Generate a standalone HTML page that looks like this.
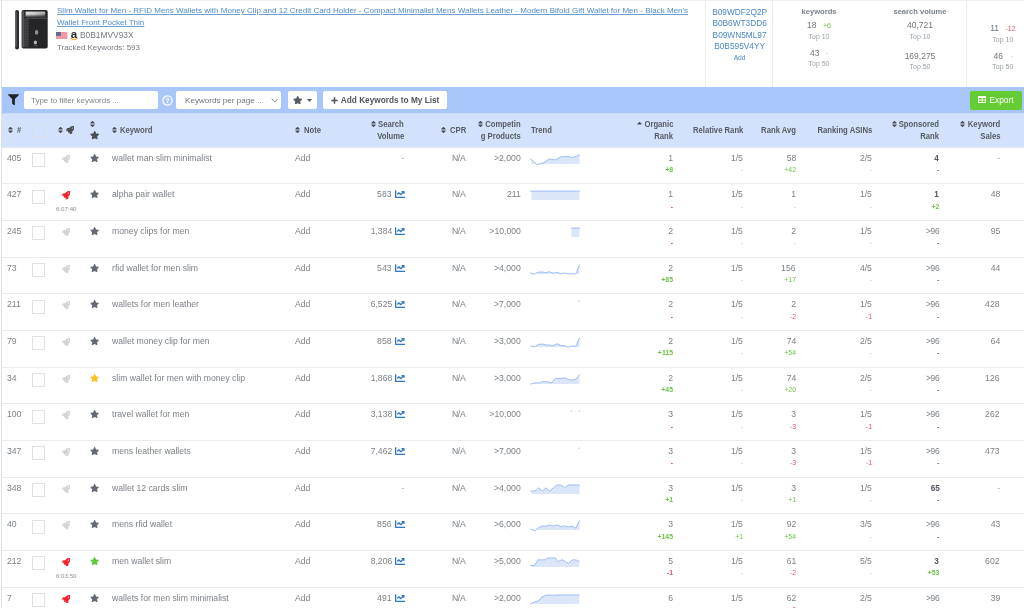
<!DOCTYPE html>
<html lang="en">
<head>
<meta charset="utf-8">
<title>Keyword Tracker</title>
<style>
*{box-sizing:border-box;margin:0;padding:0}
html,body{width:1024px;height:608px;overflow:hidden;background:#fff}
body{position:relative;font-family:"Liberation Sans",sans-serif;color:#6b747d;font-size:8.65px;line-height:11.5px}
.a{position:absolute;white-space:nowrap}
.c{font-size:9.3px;line-height:11.5px;color:#7b8188;transform:scaleX(.93)}
.ol{transform-origin:0 50%}
.or{transform-origin:100% 50%}
.b{font-weight:700;color:#4f565e;font-size:8.8px}
.s96{font-size:9px;letter-spacing:-0.3px}
.na{letter-spacing:-0.4px}
.d{font-size:6.9px;line-height:8px}
.db{font-weight:700}
.dg{color:#b9bec3}
.dp{color:#6cc24a}
.dr{color:#e25563}
.tm{font-size:6.2px;line-height:8px;color:#8b9197}
.rl{left:2px;width:1022px;height:1px;background:#e8eaec}
.cb{left:31.5px;width:13.5px;height:13.9px;border:1px solid #dfe0e2;background:#fff;border-radius:0.5px}
.lb{left:1px;top:0;width:1px;height:608px;background:#dfe1e4}
.vl{top:0;width:1px;height:87px;background:#e9ebed}
.tb{left:2px;top:87px;width:1022px;height:26px;background:#a9c6fb}
.hd{left:2px;top:113px;width:1022px;height:34px;background:#d2e2fd;border-top:1px solid #cbd7ea}
.hl{left:2px;top:147px;width:1022px;height:1px;background:#e3e5e8}
.h{font-size:8.6px;line-height:11.6px;font-weight:700;color:#555b62;transform:scaleX(.895)}
.btn{background:#fff;border-radius:2px;top:91.3px;height:18px}
.lnk{color:#4f8bc9;text-decoration:underline;text-decoration-thickness:0.8px;text-underline-offset:1.2px;text-decoration-color:#6a9fd4;font-size:8.03px;line-height:11px}
.asin{color:#4a86c5;font-size:8.3px;line-height:11.5px}
.st{font-size:7.6px;line-height:10px;color:#7c848b;font-weight:700}
.sn{font-size:8.5px;line-height:11px;color:#6f767d}
.sl{font-size:7px;line-height:9px;color:#9aa0a6}
</style>
</head>
<body>
<div id="w" style="position:absolute;left:0;top:0;width:1024px;height:608px;will-change:transform">
<div class="a" style="left:0;top:0;width:1024px;height:1px;background:#eceef0"></div>
<div class="a lb"></div>
<!-- product -->
<svg class="a" style="left:14px;top:9px" width="35" height="42" viewBox="0 0 35 42">
<defs>
<linearGradient id="gs" x1="0" y1="0" x2="1" y2="1"><stop offset="0" stop-color="#f2f2f2"/><stop offset="0.55" stop-color="#b5b5b5"/><stop offset="1" stop-color="#5c5c5c"/></linearGradient>
<pattern id="cf" width="1.6" height="1.6" patternUnits="userSpaceOnUse"><rect width="0.8" height="0.8" fill="#8d8d8d"/><rect x="0.8" y="0.8" width="0.8" height="0.8" fill="#6e6e6e"/></pattern>
</defs>
<rect x="1.1" y="1" width="3.9" height="39.4" rx="1.9" fill="#2c2c2e"/>
<rect x="1.5" y="3" width="0.9" height="35" fill="#8a8a8e"/>
<rect x="7.6" y="1" width="26.1" height="38.6" rx="1.8" fill="#252527"/>
<rect x="8.3" y="2" width="2" height="36.4" fill="#55555a"/>
<rect x="11.6" y="2.6" width="19.6" height="5" fill="url(#gs)"/>
<rect x="11.6" y="6.4" width="19.6" height="1.4" fill="#3a3a3c" opacity="0.6"/>
<rect x="12.5" y="8.800" width="20.5" height="0.600" fill="#77777b"/>
<rect x="10.5" y="9.6" width="4.2" height="28.5" fill="url(#cf)" opacity="0.55"/>
<ellipse cx="22.600" cy="23.400" rx="1.700" ry="2.400" fill="#8f8f93"/>
<ellipse cx="21.400" cy="33.500" rx="1.600" ry="2" fill="#b4b4b8"/>
<rect x="19.6" y="36.600" width="3.800" height="0.500" fill="#77777b"/>
</svg>
<div class="a lnk" style="left:57px;top:4.9px">Slim Wallet for Men - RFID Mens Wallets with Money Clip and 12 Credit Card Holder - Compact Minimalist Mens Wallets Leather - Modern Bifold Gift Wallet for Men - Black Men's</div>
<div class="a lnk" style="left:57px;top:16.9px">Wallet Front Pocket Thin</div>
<svg class="a" style="left:56.3px;top:31.9px" width="11.4" height="7.1" viewBox="0 0 22.800 14.200"><rect width="22.800" height="14.200" fill="#ee95a1"/><rect y="2.200" width="22.800" height="1.600" fill="#f0a4ae"/><rect y="6.500" width="22.800" height="1.600" fill="#f0a4ae"/><rect y="10.800" width="22.800" height="1.600" fill="#f0a4ae"/><rect width="9.800" height="7.800" fill="#666b86"/><circle cx="6.400" cy="6.800" r="1.500" fill="#3f86d8"/></svg>
<svg class="a" style="left:69px;top:29px" width="10" height="12" viewBox="0 0 10 12"><text x="5" y="8.500" text-anchor="middle" style="font-family:'Liberation Sans',sans-serif;font-weight:700;font-size:11.500px" fill="#25272b">a</text><path d="M1.300 9.400 Q5 12.200 8.700 9.400" stroke="#f08a24" stroke-width="1" fill="none"/><path d="M3.800 10.600 H6.200" stroke="#f7c325" stroke-width="1" fill="none"/></svg>
<div class="a" style="left:80px;top:30px;font-size:8.4px;line-height:11px;color:#737b83">B0B1MVV93X</div>
<div class="a" style="left:57px;top:42px;font-size:7.93px;line-height:11px;color:#737b83">Tracked Keywords: 593</div>

<div class="a vl" style="left:705px"></div>
<div class="a vl" style="left:772px"></div>
<div class="a vl" style="left:966px"></div>

<div class="a asin" style="left:639.6px;width:200px;text-align:center;top:6.9px">B09WDF2Q2P</div>
<div class="a asin" style="left:639.6px;width:200px;text-align:center;top:18.4px">B0B6WT3DD6</div>
<div class="a asin" style="left:639.6px;width:200px;text-align:center;top:29.9px">B09WN5ML97</div>
<div class="a asin" style="left:639.6px;width:200px;text-align:center;top:41.3px">B0B595V4YY</div>
<div class="a" style="left:639.6px;width:200px;text-align:center;top:53.4px;font-size:6.6px;line-height:9px;color:#4a86c5">Add</div>

<div class="a st" style="left:719px;width:200px;text-align:center;top:6.6px">keywords</div>
<div class="a sn" style="right:207.5px;top:19.8px">18</div>
<div class="a d dp" style="left:823px;top:21.6px">+6</div>
<div class="a sl" style="left:719px;width:200px;text-align:center;top:31.6px">Top 10</div>
<div class="a sn" style="right:204.5px;top:47.6px">43</div>
<div class="a d dg" style="left:826px;top:49.4px">-</div>
<div class="a sl" style="left:719px;width:200px;text-align:center;top:58.8px">Top 50</div>

<div class="a st" style="left:820px;width:200px;text-align:center;top:6.6px">search volume</div>
<div class="a sn" style="left:820px;width:200px;text-align:center;top:19.8px">40,721</div>
<div class="a sl" style="left:820px;width:200px;text-align:center;top:31.6px">Top 10</div>
<div class="a sn" style="left:820px;width:200px;text-align:center;top:50.8px">169,275</div>
<div class="a sl" style="left:820px;width:200px;text-align:center;top:62px">Top 50</div>

<div class="a sn" style="right:25px;top:23.3px">11</div>
<div class="a d dr" style="left:1005.5px;top:25px">-12</div>
<div class="a sl" style="left:902.8px;width:200px;text-align:center;top:35px">Top 10</div>
<div class="a sn" style="right:21px;top:50.5px">46</div>
<div class="a d dg" style="left:1011px;top:52.2px">-</div>
<div class="a sl" style="left:902.8px;width:200px;text-align:center;top:62.4px">Top 50</div>

<!-- toolbar -->
<div class="a tb"></div>
<svg class="a" style="left:7.5px;top:94.3px" width="11" height="11.4" viewBox="0 0 512 512" fill="#1f2226"><path d="M487.976 0H24.028C2.710 0-8.047 25.866 7.058 40.971L192 225.941V432c0 7.831 3.821 15.170 10.237 19.662l80 55.980C298.020 518.690 320 507.493 320 487.980V225.941l184.947-184.970C520.021 25.896 509.338 0 487.976 0z"/></svg>
<div class="a btn" style="left:24px;width:134px"></div>
<div class="a" style="left:31px;top:94.6px;font-size:7.96px;line-height:11px;color:#7f868d">Type to filter keywords ...</div>
<svg class="a" style="left:162px;top:94.6px" width="11" height="11" viewBox="0 0 22 22"><circle cx="11" cy="11" r="9.2" fill="none" stroke="#fff" stroke-width="2.4"/><text x="11" y="15.8" text-anchor="middle" style="font-family:'Liberation Sans',sans-serif;font-weight:700;font-size:14px" fill="#fff">?</text></svg>
<div class="a btn" style="left:176.2px;width:104.4px"></div>
<div class="a" style="left:185px;top:94.6px;font-size:8.1px;line-height:11px;color:#6b747d">Keywords per page ...</div>
<svg class="a" style="left:270.5px;top:98px" width="7.6" height="4.8" viewBox="0 0 7.6 4.8"><path d="M0.7 0.7 L3.8 3.9 L6.9 0.7" fill="none" stroke="#666d74" stroke-width="0.85"/></svg>
<div class="a btn" style="left:287.5px;width:29.5px"></div>
<svg class="a" style="left:292.5px;top:95.8px" width="9.4" height="8.4" viewBox="0 0 576 512" fill="#555c63"><path d="M259.300 17.800L194 150.200 47.900 171.500c-26.200 3.800-36.700 36.100-17.700 54.600l105.700 103-25 145.500c-4.500 26.300 23.200 46 46.400 33.700L288 439.600l130.700 68.700c23.200 12.200 50.900-7.400 46.400-33.700l-25-145.500 105.700-103c19-18.500 8.500-50.800-17.700-54.600L382 150.200 316.700 17.800c-11.700-23.600-45.600-23.900-57.400 0z"/></svg>
<svg class="a" style="left:306.5px;top:98.8px" width="5" height="3" viewBox="0 0 5 3"><path d="M0 0H5L2.500 3Z" fill="#555c63"/></svg>
<div class="a btn" style="left:322.7px;width:124px"></div>
<svg class="a" style="left:330.8px;top:96.6px" width="7" height="7" viewBox="0 0 7 7"><path d="M3.5 0.3V6.7M0.300 3.5H6.700" stroke="#4a5158" stroke-width="1.5" fill="none"/></svg>
<div class="a" style="left:340.8px;top:94.8px;font-size:8.25px;line-height:11px;font-weight:700;color:#4f565d">Add Keywords to My List</div>
<div class="a" style="left:970px;top:90.8px;width:52.2px;height:19px;background:#66cc33;border-radius:2px"></div>
<svg class="a" style="left:978px;top:96.3px" width="8.4" height="7.2" viewBox="0 0 14 12"><rect x="0" y="0" width="14" height="12" rx="1" fill="#fff"/><rect x="1.6" y="3.4" width="4.6" height="2.6" fill="#66cc33"/><rect x="7.800" y="3.4" width="4.600" height="2.6" fill="#66cc33"/><rect x="1.600" y="7.600" width="4.600" height="2.600" fill="#66cc33"/><rect x="7.800" y="7.600" width="4.600" height="2.600" fill="#66cc33"/></svg>
<div class="a" style="left:989.4px;top:95px;font-size:8.4px;line-height:11px;color:#fff">Export</div>

<!-- header -->
<div class="a hd"></div><div class="a hl"></div>
<svg class="a" style="left:8px;top:126.2px" width="5" height="8" viewBox="0 0 320 512" fill="#4b4f55"><path d="M41 288h238c21.400 0 32.100 25.900 17 41L177 448c-9.400 9.400-24.600 9.400-33.900 0L24 329c-15.100-15.100-4.400-41 17-41zm255-105L177 64c-9.400-9.400-24.600-9.400-33.900 0L24 183c-15.100 15.100-4.400 41 17 41h238c21.400 0 32.100-25.900 17-41z"/></svg>
<div class="a ol h" style="left:16.5px;top:125.10px;">#</div>
<div class="a" style="left:31.6px;top:123.6px;width:13.2px;height:13.2px;border:1px dotted #e0dbd2;border-radius:1px"></div>
<svg class="a" style="left:58px;top:126.2px" width="5" height="8" viewBox="0 0 320 512" fill="#4b4f55"><path d="M41 288h238c21.400 0 32.100 25.900 17 41L177 448c-9.400 9.400-24.600 9.400-33.900 0L24 329c-15.100-15.100-4.400-41 17-41zm255-105L177 64c-9.400-9.400-24.600-9.400-33.900 0L24 183c-15.100 15.100-4.400 41 17 41h238c21.400 0 32.100-25.900 17-41z"/></svg>
<svg class="a" style="left:66px;top:126px" width="8.4" height="8.4" viewBox="0 0 512 512" fill="#4b4f55"><path d="M505.1 19.1C503.8 13 499 8.2 492.900 6.900c-32.600-7-58.100-7-83.600-7C305.200 0 243.200 55.700 196.800 128H94.800c-16.300 0-35.600 11.900-42.900 26.500L2.500 253.300c-1.600 3.400-2.500 7-2.500 10.700 0 13.300 10.700 24 24 24h103.800l-22.500 22.500c-11.400 11.400-13 32.300 0 45.300l50.900 50.900c11.200 11.200 32.200 13.200 45.300 0l22.500-22.500V488c0 13.300 10.700 24 24 24 3.700 0 7.300-.9 10.700-2.500l98.700-49.400c14.600-7.300 26.500-26.600 26.500-42.900V314.800c72.600-46.300 128-108.400 128-211.100.1-25.200.1-50.700-6.800-84.600zM384 168c-22.100 0-40-17.900-40-40s17.900-40 40-40 40 17.900 40 40-17.900 40-40 40z"/></svg>
<svg class="a" style="left:89.9px;top:120.4px" width="5" height="8" viewBox="0 0 320 512" fill="#4b4f55"><path d="M41 288h238c21.400 0 32.100 25.900 17 41L177 448c-9.400 9.400-24.600 9.400-33.900 0L24 329c-15.100-15.100-4.400-41 17-41zm255-105L177 64c-9.400-9.400-24.600-9.400-33.900 0L24 183c-15.100 15.100-4.400 41 17 41h238c21.400 0 32.100-25.900 17-41z"/></svg>
<svg class="a" style="left:89.8px;top:131.2px" width="9.4" height="8.4" viewBox="0 0 576 512" fill="#4b4f55"><path d="M259.300 17.800L194 150.200 47.900 171.500c-26.200 3.800-36.700 36.100-17.700 54.600l105.700 103-25 145.500c-4.500 26.300 23.200 46 46.400 33.700L288 439.600l130.700 68.700c23.200 12.200 50.900-7.400 46.400-33.700l-25-145.500 105.700-103c19-18.500 8.500-50.800-17.700-54.600L382 150.200 316.700 17.800c-11.700-23.600-45.600-23.900-57.400 0z"/></svg>
<svg class="a" style="left:112px;top:126.2px" width="5" height="8" viewBox="0 0 320 512" fill="#4b4f55"><path d="M41 288h238c21.400 0 32.100 25.900 17 41L177 448c-9.400 9.400-24.600 9.400-33.900 0L24 329c-15.100-15.100-4.400-41 17-41zm255-105L177 64c-9.400-9.400-24.600-9.400-33.900 0L24 183c-15.100 15.100-4.400 41 17 41h238c21.400 0 32.100-25.900 17-41z"/></svg>
<div class="a ol h" style="left:120px;top:125.10px;">Keyword</div>
<svg class="a" style="left:295px;top:126.2px" width="5" height="8" viewBox="0 0 320 512" fill="#4b4f55"><path d="M41 288h238c21.400 0 32.100 25.900 17 41L177 448c-9.400 9.400-24.600 9.400-33.900 0L24 329c-15.100-15.100-4.400-41 17-41zm255-105L177 64c-9.400-9.400-24.600-9.400-33.900 0L24 183c-15.100 15.100-4.400 41 17 41h238c21.400 0 32.100-25.900 17-41z"/></svg>
<div class="a ol h" style="left:304px;top:125.10px;">Note</div>
<svg class="a" style="left:371px;top:120.4px" width="5" height="8" viewBox="0 0 320 512" fill="#4b4f55"><path d="M41 288h238c21.400 0 32.100 25.900 17 41L177 448c-9.400 9.400-24.600 9.400-33.900 0L24 329c-15.100-15.100-4.400-41 17-41zm255-105L177 64c-9.400-9.400-24.600-9.400-33.900 0L24 183c-15.100 15.100-4.400 41 17 41h238c21.400 0 32.100-25.900 17-41z"/></svg>
<div class="a or h" style="right:620px;top:119.20px;">Search</div>
<div class="a or h" style="right:620px;top:131.00px;">Volume</div>
<svg class="a" style="left:441px;top:126.2px" width="5" height="8" viewBox="0 0 320 512" fill="#4b4f55"><path d="M41 288h238c21.400 0 32.100 25.900 17 41L177 448c-9.400 9.400-24.600 9.400-33.900 0L24 329c-15.100-15.100-4.400-41 17-41zm255-105L177 64c-9.400-9.400-24.600-9.400-33.900 0L24 183c-15.100 15.100-4.400 41 17 41h238c21.400 0 32.100-25.900 17-41z"/></svg>
<div class="a ol h" style="left:450px;top:125.10px;">CPR</div>
<svg class="a" style="left:477.5px;top:120.4px" width="5" height="8" viewBox="0 0 320 512" fill="#4b4f55"><path d="M41 288h238c21.400 0 32.100 25.900 17 41L177 448c-9.400 9.400-24.600 9.400-33.900 0L24 329c-15.100-15.100-4.400-41 17-41zm255-105L177 64c-9.400-9.400-24.600-9.400-33.900 0L24 183c-15.100 15.100-4.400 41 17 41h238c21.400 0 32.100-25.900 17-41z"/></svg>
<div class="a or h" style="right:503.5px;top:119.20px;">Competin</div>
<div class="a or h" style="right:503.5px;top:131.00px;">g Products</div>
<div class="a ol h" style="left:530.7px;top:125.10px;">Trend</div>
<svg class="a" style="left:636.5px;top:121.2px" width="5" height="8" viewBox="0 0 320 512" fill="#4b4f55"><path d="M279 224H41c-21.400 0-32.100-25.900-17-41L143 64c9.400-9.400 24.600-9.400 33.900 0l119 119c15.200 15.100 4.500 41-16.900 41z"/></svg>
<div class="a or h" style="right:351px;top:119.20px;">Organic</div>
<div class="a or h" style="right:351px;top:131.00px;">Rank</div>
<div class="a or h" style="right:281px;top:125.10px;">Relative Rank</div>
<div class="a or h" style="right:228px;top:125.10px;">Rank Avg</div>
<div class="a or h" style="right:152px;top:125.10px;">Ranking ASINs</div>
<svg class="a" style="left:892px;top:120.4px" width="5" height="8" viewBox="0 0 320 512" fill="#4b4f55"><path d="M41 288h238c21.400 0 32.100 25.900 17 41L177 448c-9.400 9.400-24.600 9.400-33.900 0L24 329c-15.100-15.100-4.400-41 17-41zm255-105L177 64c-9.400-9.400-24.600-9.400-33.900 0L24 183c-15.100 15.100-4.400 41 17 41h238c21.400 0 32.100-25.900 17-41z"/></svg>
<div class="a or h" style="right:84.70000000000005px;top:119.20px;">Sponsored</div>
<div class="a or h" style="right:84.70000000000005px;top:131.00px;">Rank</div>
<svg class="a" style="left:960px;top:120.4px" width="5" height="8" viewBox="0 0 320 512" fill="#4b4f55"><path d="M41 288h238c21.400 0 32.100 25.900 17 41L177 448c-9.400 9.400-24.600 9.400-33.900 0L24 329c-15.100-15.100-4.400-41 17-41zm255-105L177 64c-9.400-9.400-24.600-9.400-33.900 0L24 183c-15.100 15.100-4.400 41 17 41h238c21.400 0 32.100-25.900 17-41z"/></svg>
<div class="a or h" style="right:24px;top:119.20px;">Keyword</div>
<div class="a or h" style="right:24px;top:131.00px;">Sales</div>
<div class="a rl" style="top:183.37px"></div>
<div class="a ol c" style="left:7px;top:152.80px;">405</div>
<div class="a cb" style="top:153.00px"></div>
<svg class="a" style="left:61.8px;top:154.5px" width="8.6" height="8.6" viewBox="0 0 512 512" fill="#d2d4d6"><path d="M505.1 19.1C503.8 13 499 8.2 492.900 6.900c-32.600-7-58.100-7-83.600-7C305.200 0 243.200 55.700 196.800 128H94.800c-16.300 0-35.600 11.900-42.900 26.500L2.500 253.300c-1.600 3.400-2.500 7-2.500 10.700 0 13.300 10.700 24 24 24h103.800l-22.500 22.500c-11.400 11.400-13 32.300 0 45.300l50.900 50.900c11.200 11.200 32.200 13.200 45.300 0l22.500-22.500V488c0 13.300 10.700 24 24 24 3.700 0 7.300-.9 10.700-2.500l98.700-49.400c14.600-7.300 26.500-26.600 26.500-42.900V314.800c72.600-46.300 128-108.400 128-211.100.1-25.200.1-50.700-6.800-84.600zM384 168c-22.100 0-40-17.900-40-40s17.900-40 40-40 40 17.900 40 40-17.900 40-40 40z"/></svg>
<svg class="a" style="left:89.8px;top:153.7px" width="9.2" height="8.2" viewBox="0 0 576 512" fill="#646a74"><path d="M259.300 17.800L194 150.200 47.900 171.500c-26.200 3.800-36.700 36.100-17.700 54.600l105.700 103-25 145.500c-4.500 26.300 23.200 46 46.400 33.700L288 439.600l130.700 68.700c23.200 12.200 50.900-7.400 46.400-33.700l-25-145.500 105.700-103c19-18.500 8.500-50.800-17.700-54.600L382 150.200 316.700 17.800c-11.700-23.600-45.600-23.900-57.400 0z"/></svg>
<div class="a ol c" style="left:112px;top:152.80px;">wallet man slim minimalist</div>
<div class="a ol c" style="left:295.2px;top:152.80px;">Add</div>
<div class="a or c" style="right:620px;top:152.80px;color:#a0a6ac">-</div>
<div class="a ol c na" style="left:452.2px;top:152.80px;">N/A</div>
<div class="a or c" style="right:503.5px;top:152.80px;">>2,000</div>
<svg class="a" style="left:529.5px;top:153.70px" width="51" height="12" viewBox="-0.5 -0.8 51 12"><polygon points="1,9.3 1,4.1 0,4.1 6.6,9.7 12.8,8.1 18.75,4.25 24.7,5.1 30.3,2.1 36.6,1.75 42.2,2.6 46,1.4 49,0.2 49,9.3" fill="#dbe7f8"/><polyline points="0,4.1 6.6,9.7 12.8,8.1 18.75,4.25 24.7,5.1 30.3,2.1 36.6,1.75 42.2,2.6 46,1.4 49,0.2" fill="none" stroke="#9dbcf4" stroke-width="1" stroke-linejoin="round" stroke-linecap="round"/></svg>
<div class="a or c" style="right:351px;top:152.80px;">1</div>
<div class="a or d dp db" style="right:351px;top:166.10px;">+8</div>
<div class="a or c" style="right:281px;top:152.80px;">1/5</div>
<div class="a or d dg" style="right:281px;top:166.10px;">-</div>
<div class="a or c" style="right:228px;top:152.80px;">58</div>
<div class="a or d dp" style="right:228px;top:166.10px;">+42</div>
<div class="a or c" style="right:152px;top:152.80px;">2/5</div>
<div class="a or d dg" style="right:152px;top:166.10px;">-</div>
<div class="a or c b" style="right:84.70000000000005px;top:152.80px;">4</div>
<div class="a or d db" style="right:84.70000000000005px;top:166.10px;color:#6b747d">-</div>
<div class="a or c" style="right:24px;top:152.80px;color:#a0a6ac">-</div>
<div class="a rl" style="top:220.03px"></div>
<div class="a ol c" style="left:7px;top:189.47px;">427</div>
<div class="a cb" style="top:189.67px"></div>
<svg class="a" style="left:61.8px;top:191.17px" width="8.6" height="8.6" viewBox="0 0 512 512" fill="#f5222d"><path d="M505.1 19.1C503.8 13 499 8.2 492.900 6.900c-32.600-7-58.100-7-83.600-7C305.200 0 243.200 55.700 196.800 128H94.800c-16.300 0-35.600 11.900-42.900 26.500L2.500 253.300c-1.600 3.400-2.500 7-2.500 10.700 0 13.300 10.700 24 24 24h103.800l-22.500 22.500c-11.400 11.400-13 32.300 0 45.300l50.900 50.900c11.200 11.200 32.200 13.200 45.300 0l22.500-22.500V488c0 13.300 10.700 24 24 24 3.700 0 7.300-.9 10.700-2.500l98.700-49.400c14.600-7.300 26.500-26.600 26.500-42.900V314.800c72.600-46.300 128-108.400 128-211.100.1-25.200.1-50.700-6.800-84.600zM384 168c-22.100 0-40-17.900-40-40s17.900-40 40-40 40 17.900 40 40-17.900 40-40 40z"/></svg>
<div class="a tm" style="left:-33.8px;width:200px;text-align:center;top:205.27px;">6:07:40</div>
<svg class="a" style="left:89.8px;top:190.37px" width="9.2" height="8.2" viewBox="0 0 576 512" fill="#646a74"><path d="M259.300 17.800L194 150.200 47.900 171.500c-26.200 3.800-36.700 36.100-17.700 54.600l105.700 103-25 145.500c-4.500 26.300 23.200 46 46.400 33.700L288 439.600l130.700 68.700c23.200 12.200 50.900-7.400 46.400-33.700l-25-145.500 105.700-103c19-18.500 8.500-50.800-17.700-54.600L382 150.200 316.700 17.800c-11.700-23.600-45.600-23.900-57.400 0z"/></svg>
<div class="a ol c" style="left:112px;top:189.47px;">alpha pair wallet</div>
<div class="a ol c" style="left:295.2px;top:189.47px;">Add</div>
<div class="a or c" style="right:632px;top:189.47px;">583</div>
<svg class="a" style="left:394.6px;top:189.27px" width="10.2" height="10.2" viewBox="0 0 512 512" fill="#2f78c4"><path d="M496 384H64V80c0-8.840-7.160-16-16-16H16C7.160 64 0 71.160 0 80v336c0 17.670 14.330 32 32 32h464c8.840 0 16-7.160 16-16v-32c0-8.840-7.160-16-16-16zM464 96H345.940c-21.380 0-32.090 25.850-16.970 40.970l32.400 32.400L288 242.750l-73.370-73.370c-12.500-12.500-32.760-12.500-45.250 0l-68.690 68.690c-6.250 6.250-6.250 16.380 0 22.630l22.620 22.620c6.250 6.250 16.380 6.250 22.630 0L192 237.250l73.370 73.370c12.500 12.500 32.760 12.500 45.250 0l96-96 32.400 32.400c15.120 15.120 40.970 4.410 40.970-16.970V112c.01-8.840-7.150-16-15.990-16z"/></svg>
<div class="a ol c na" style="left:452.2px;top:189.47px;">N/A</div>
<div class="a or c" style="right:503.5px;top:189.47px;">211</div>
<svg class="a" style="left:529.5px;top:190.37px" width="51" height="12" viewBox="-0.5 -0.8 51 12"><polygon points="1,9.3 1,0.3 0,0.3 49,0.3 49,9.3" fill="#dbe7f8"/><polyline points="0,0.3 49,0.3" fill="none" stroke="#9dbcf4" stroke-width="1" stroke-linejoin="round" stroke-linecap="round"/></svg>
<div class="a or c" style="right:351px;top:189.47px;">1</div>
<div class="a or d dr db" style="right:351px;top:202.77px;">-</div>
<div class="a or c" style="right:281px;top:189.47px;">1/5</div>
<div class="a or d dg" style="right:281px;top:202.77px;">-</div>
<div class="a or c" style="right:228px;top:189.47px;">1</div>
<div class="a or d dg" style="right:228px;top:202.77px;">-</div>
<div class="a or c" style="right:152px;top:189.47px;">1/5</div>
<div class="a or d dg" style="right:152px;top:202.77px;">-</div>
<div class="a or c b" style="right:84.70000000000005px;top:189.47px;">1</div>
<div class="a or d dp db" style="right:84.70000000000005px;top:202.77px;">+2</div>
<div class="a or c" style="right:24px;top:189.47px;">48</div>
<div class="a rl" style="top:256.70px"></div>
<div class="a ol c" style="left:7px;top:226.13px;">245</div>
<div class="a cb" style="top:226.33px"></div>
<svg class="a" style="left:61.8px;top:227.83px" width="8.6" height="8.6" viewBox="0 0 512 512" fill="#d2d4d6"><path d="M505.1 19.1C503.8 13 499 8.2 492.900 6.900c-32.600-7-58.100-7-83.600-7C305.200 0 243.200 55.700 196.800 128H94.800c-16.300 0-35.600 11.900-42.900 26.500L2.500 253.300c-1.600 3.400-2.500 7-2.500 10.700 0 13.300 10.700 24 24 24h103.800l-22.500 22.500c-11.400 11.400-13 32.300 0 45.300l50.900 50.900c11.200 11.200 32.200 13.200 45.300 0l22.500-22.500V488c0 13.300 10.700 24 24 24 3.700 0 7.300-.9 10.700-2.500l98.700-49.400c14.600-7.300 26.500-26.600 26.500-42.900V314.800c72.600-46.300 128-108.400 128-211.100.1-25.200.1-50.700-6.800-84.600zM384 168c-22.100 0-40-17.900-40-40s17.900-40 40-40 40 17.900 40 40-17.900 40-40 40z"/></svg>
<svg class="a" style="left:89.8px;top:227.03px" width="9.2" height="8.2" viewBox="0 0 576 512" fill="#646a74"><path d="M259.300 17.800L194 150.200 47.900 171.500c-26.200 3.800-36.700 36.100-17.700 54.600l105.700 103-25 145.500c-4.500 26.300 23.200 46 46.400 33.700L288 439.600l130.700 68.700c23.200 12.200 50.900-7.400 46.400-33.700l-25-145.500 105.700-103c19-18.500 8.500-50.800-17.700-54.600L382 150.200 316.700 17.800c-11.700-23.600-45.600-23.900-57.400 0z"/></svg>
<div class="a ol c" style="left:112px;top:226.13px;">money clips for men</div>
<div class="a ol c" style="left:295.2px;top:226.13px;">Add</div>
<div class="a or c" style="right:632px;top:226.13px;">1,384</div>
<svg class="a" style="left:394.6px;top:225.93px" width="10.2" height="10.2" viewBox="0 0 512 512" fill="#2f78c4"><path d="M496 384H64V80c0-8.840-7.160-16-16-16H16C7.160 64 0 71.160 0 80v336c0 17.670 14.330 32 32 32h464c8.840 0 16-7.160 16-16v-32c0-8.840-7.160-16-16-16zM464 96H345.940c-21.380 0-32.090 25.850-16.970 40.970l32.400 32.400L288 242.750l-73.370-73.370c-12.500-12.500-32.760-12.500-45.250 0l-68.690 68.690c-6.250 6.250-6.250 16.380 0 22.630l22.620 22.620c6.250 6.250 16.380 6.250 22.630 0L192 237.250l73.370 73.370c12.500 12.500 32.760 12.500 45.250 0l96-96 32.400 32.400c15.120 15.120 40.970 4.410 40.970-16.970V112c.01-8.840-7.150-16-15.990-16z"/></svg>
<div class="a ol c na" style="left:452.2px;top:226.13px;">N/A</div>
<div class="a or c" style="right:503.5px;top:226.13px;">>10,000</div>
<svg class="a" style="left:529.5px;top:227.03px" width="51" height="12" viewBox="-0.5 -0.8 51 12"><polygon points="41,9.3 41,0.3 41,0.3 49,0.3 49,9.3" fill="#dbe7f8"/><polyline points="41,0.3 49,0.3" fill="none" stroke="#9dbcf4" stroke-width="1" stroke-linejoin="round" stroke-linecap="round"/></svg>
<div class="a or c" style="right:351px;top:226.13px;">2</div>
<div class="a or d dr db" style="right:351px;top:239.43px;">-</div>
<div class="a or c" style="right:281px;top:226.13px;">1/5</div>
<div class="a or d dg" style="right:281px;top:239.43px;">-</div>
<div class="a or c" style="right:228px;top:226.13px;">2</div>
<div class="a or d dg" style="right:228px;top:239.43px;">-</div>
<div class="a or c" style="right:152px;top:226.13px;">1/5</div>
<div class="a or d dg" style="right:152px;top:239.43px;">-</div>
<div class="a or c s96" style="right:84.70000000000005px;top:226.13px;">>96</div>
<div class="a or d db" style="right:84.70000000000005px;top:239.43px;color:#6b747d">-</div>
<div class="a or c" style="right:24px;top:226.13px;">95</div>
<div class="a rl" style="top:293.37px"></div>
<div class="a ol c" style="left:7px;top:262.80px;">73</div>
<div class="a cb" style="top:263.00px"></div>
<svg class="a" style="left:61.8px;top:264.5px" width="8.6" height="8.6" viewBox="0 0 512 512" fill="#d2d4d6"><path d="M505.1 19.1C503.8 13 499 8.2 492.900 6.900c-32.600-7-58.100-7-83.600-7C305.200 0 243.200 55.700 196.800 128H94.800c-16.300 0-35.600 11.900-42.900 26.500L2.500 253.300c-1.600 3.400-2.500 7-2.500 10.700 0 13.300 10.700 24 24 24h103.800l-22.500 22.500c-11.400 11.400-13 32.300 0 45.300l50.900 50.900c11.200 11.200 32.200 13.200 45.300 0l22.500-22.500V488c0 13.300 10.700 24 24 24 3.700 0 7.300-.9 10.700-2.500l98.700-49.400c14.600-7.300 26.500-26.600 26.500-42.900V314.800c72.600-46.300 128-108.400 128-211.100.1-25.200.1-50.700-6.800-84.600zM384 168c-22.100 0-40-17.900-40-40s17.900-40 40-40 40 17.900 40 40-17.900 40-40 40z"/></svg>
<svg class="a" style="left:89.8px;top:263.7px" width="9.2" height="8.2" viewBox="0 0 576 512" fill="#646a74"><path d="M259.300 17.800L194 150.200 47.900 171.500c-26.200 3.800-36.700 36.100-17.700 54.600l105.700 103-25 145.500c-4.500 26.300 23.200 46 46.400 33.700L288 439.600l130.700 68.700c23.200 12.200 50.900-7.400 46.400-33.700l-25-145.500 105.700-103c19-18.500 8.500-50.800-17.700-54.600L382 150.200 316.700 17.800c-11.700-23.600-45.600-23.900-57.400 0z"/></svg>
<div class="a ol c" style="left:112px;top:262.80px;">rfid wallet for men slim</div>
<div class="a ol c" style="left:295.2px;top:262.80px;">Add</div>
<div class="a or c" style="right:632px;top:262.80px;">543</div>
<svg class="a" style="left:394.6px;top:262.6px" width="10.2" height="10.2" viewBox="0 0 512 512" fill="#2f78c4"><path d="M496 384H64V80c0-8.840-7.160-16-16-16H16C7.160 64 0 71.160 0 80v336c0 17.670 14.330 32 32 32h464c8.840 0 16-7.160 16-16v-32c0-8.840-7.160-16-16-16zM464 96H345.940c-21.380 0-32.090 25.850-16.970 40.970l32.400 32.400L288 242.750l-73.370-73.370c-12.500-12.500-32.760-12.500-45.250 0l-68.690 68.690c-6.250 6.250-6.250 16.380 0 22.630l22.620 22.620c6.250 6.250 16.380 6.250 22.630 0L192 237.250l73.370 73.370c12.500 12.500 32.760 12.500 45.250 0l96-96 32.400 32.400c15.120 15.120 40.970 4.410 40.970-16.970V112c.01-8.840-7.150-16-15.990-16z"/></svg>
<div class="a ol c na" style="left:452.2px;top:262.80px;">N/A</div>
<div class="a or c" style="right:503.5px;top:262.80px;">>4,000</div>
<svg class="a" style="left:529.5px;top:263.70px" width="51" height="12" viewBox="-0.5 -0.8 51 12"><polygon points="1,9.3 1,8.4 0,8.4 4,9.5 7.5,7.3 11.5,7.2 15.3,7.7 19,6.9 22.8,8.4 26.5,7.5 30.3,9 34.4,8.3 37.8,9 41.5,9 45.3,9 49,0.3 49,9.3" fill="#dbe7f8"/><polyline points="0,8.4 4,9.5 7.5,7.3 11.5,7.2 15.3,7.7 19,6.9 22.8,8.4 26.5,7.5 30.3,9 34.4,8.3 37.8,9 41.5,9 45.3,9 49,0.3" fill="none" stroke="#9dbcf4" stroke-width="1" stroke-linejoin="round" stroke-linecap="round"/></svg>
<div class="a or c" style="right:351px;top:262.80px;">2</div>
<div class="a or d dp db" style="right:351px;top:276.10px;">+85</div>
<div class="a or c" style="right:281px;top:262.80px;">1/5</div>
<div class="a or d dg" style="right:281px;top:276.10px;">-</div>
<div class="a or c" style="right:228px;top:262.80px;">156</div>
<div class="a or d dp" style="right:228px;top:276.10px;">+17</div>
<div class="a or c" style="right:152px;top:262.80px;">4/5</div>
<div class="a or d dg" style="right:152px;top:276.10px;">-</div>
<div class="a or c s96" style="right:84.70000000000005px;top:262.80px;">>96</div>
<div class="a or d db" style="right:84.70000000000005px;top:276.10px;color:#6b747d">-</div>
<div class="a or c" style="right:24px;top:262.80px;">44</div>
<div class="a rl" style="top:330.03px"></div>
<div class="a ol c" style="left:7px;top:299.47px;">211</div>
<div class="a cb" style="top:299.67px"></div>
<svg class="a" style="left:61.8px;top:301.17px" width="8.6" height="8.6" viewBox="0 0 512 512" fill="#d2d4d6"><path d="M505.1 19.1C503.8 13 499 8.2 492.900 6.900c-32.600-7-58.100-7-83.600-7C305.200 0 243.200 55.700 196.800 128H94.800c-16.300 0-35.600 11.900-42.900 26.500L2.500 253.300c-1.600 3.400-2.500 7-2.500 10.700 0 13.300 10.700 24 24 24h103.800l-22.500 22.500c-11.400 11.400-13 32.300 0 45.300l50.900 50.900c11.200 11.200 32.200 13.200 45.300 0l22.500-22.500V488c0 13.300 10.700 24 24 24 3.700 0 7.300-.9 10.700-2.500l98.700-49.400c14.600-7.300 26.500-26.600 26.500-42.900V314.800c72.600-46.300 128-108.400 128-211.100.1-25.200.1-50.700-6.800-84.600zM384 168c-22.100 0-40-17.900-40-40s17.900-40 40-40 40 17.900 40 40-17.900 40-40 40z"/></svg>
<svg class="a" style="left:89.8px;top:300.37px" width="9.2" height="8.2" viewBox="0 0 576 512" fill="#646a74"><path d="M259.300 17.800L194 150.200 47.900 171.500c-26.200 3.800-36.700 36.100-17.700 54.600l105.700 103-25 145.500c-4.500 26.300 23.200 46 46.400 33.700L288 439.600l130.700 68.700c23.200 12.200 50.900-7.400 46.400-33.700l-25-145.500 105.700-103c19-18.500 8.500-50.800-17.700-54.600L382 150.200 316.700 17.800c-11.700-23.600-45.600-23.900-57.400 0z"/></svg>
<div class="a ol c" style="left:112px;top:299.47px;">wallets for men leather</div>
<div class="a ol c" style="left:295.2px;top:299.47px;">Add</div>
<div class="a or c" style="right:632px;top:299.47px;">6,525</div>
<svg class="a" style="left:394.6px;top:299.27px" width="10.2" height="10.2" viewBox="0 0 512 512" fill="#2f78c4"><path d="M496 384H64V80c0-8.840-7.160-16-16-16H16C7.160 64 0 71.160 0 80v336c0 17.670 14.330 32 32 32h464c8.840 0 16-7.160 16-16v-32c0-8.840-7.160-16-16-16zM464 96H345.940c-21.380 0-32.090 25.850-16.970 40.970l32.400 32.400L288 242.750l-73.370-73.370c-12.500-12.500-32.760-12.500-45.250 0l-68.690 68.690c-6.250 6.250-6.250 16.380 0 22.630l22.620 22.620c6.250 6.250 16.380 6.250 22.630 0L192 237.250l73.370 73.370c12.500 12.500 32.760 12.500 45.250 0l96-96 32.400 32.400c15.120 15.120 40.970 4.410 40.970-16.970V112c.01-8.840-7.150-16-15.990-16z"/></svg>
<div class="a ol c na" style="left:452.2px;top:299.47px;">N/A</div>
<div class="a or c" style="right:503.5px;top:299.47px;">>7,000</div>
<svg class="a" style="left:529.5px;top:300.37px" width="51" height="12" viewBox="-0.5 -0.8 51 12"><circle cx="48.5" cy="0.3" r="0.7" fill="#8ab1ec"/></svg>
<div class="a or c" style="right:351px;top:299.47px;">2</div>
<div class="a or d dr db" style="right:351px;top:312.77px;">-</div>
<div class="a or c" style="right:281px;top:299.47px;">1/5</div>
<div class="a or d dg" style="right:281px;top:312.77px;">-</div>
<div class="a or c" style="right:228px;top:299.47px;">2</div>
<div class="a or d dr" style="right:228px;top:312.77px;">-2</div>
<div class="a or c" style="right:152px;top:299.47px;">1/5</div>
<div class="a or d dr" style="right:152px;top:312.77px;">-1</div>
<div class="a or c s96" style="right:84.70000000000005px;top:299.47px;">>96</div>
<div class="a or d db" style="right:84.70000000000005px;top:312.77px;color:#6b747d">-</div>
<div class="a or c" style="right:24px;top:299.47px;">428</div>
<div class="a rl" style="top:366.70px"></div>
<div class="a ol c" style="left:7px;top:336.13px;">79</div>
<div class="a cb" style="top:336.33px"></div>
<svg class="a" style="left:61.8px;top:337.83px" width="8.6" height="8.6" viewBox="0 0 512 512" fill="#d2d4d6"><path d="M505.1 19.1C503.8 13 499 8.2 492.900 6.900c-32.600-7-58.100-7-83.600-7C305.200 0 243.200 55.700 196.800 128H94.800c-16.300 0-35.600 11.900-42.900 26.500L2.500 253.300c-1.600 3.400-2.500 7-2.500 10.700 0 13.300 10.700 24 24 24h103.800l-22.500 22.500c-11.400 11.400-13 32.300 0 45.300l50.900 50.900c11.200 11.200 32.200 13.200 45.300 0l22.500-22.500V488c0 13.300 10.700 24 24 24 3.700 0 7.300-.9 10.700-2.500l98.700-49.400c14.600-7.300 26.500-26.600 26.500-42.900V314.800c72.600-46.300 128-108.400 128-211.100.1-25.200.1-50.700-6.800-84.600zM384 168c-22.100 0-40-17.900-40-40s17.900-40 40-40 40 17.900 40 40-17.900 40-40 40z"/></svg>
<svg class="a" style="left:89.8px;top:337.03px" width="9.2" height="8.2" viewBox="0 0 576 512" fill="#646a74"><path d="M259.300 17.800L194 150.200 47.900 171.500c-26.200 3.800-36.700 36.100-17.700 54.600l105.700 103-25 145.500c-4.500 26.300 23.200 46 46.400 33.700L288 439.600l130.700 68.700c23.200 12.200 50.900-7.400 46.400-33.700l-25-145.500 105.700-103c19-18.500 8.500-50.800-17.700-54.600L382 150.200 316.700 17.800c-11.700-23.600-45.600-23.900-57.400 0z"/></svg>
<div class="a ol c" style="left:112px;top:336.13px;">wallet money clip for men</div>
<div class="a ol c" style="left:295.2px;top:336.13px;">Add</div>
<div class="a or c" style="right:632px;top:336.13px;">858</div>
<svg class="a" style="left:394.6px;top:335.94px" width="10.2" height="10.2" viewBox="0 0 512 512" fill="#2f78c4"><path d="M496 384H64V80c0-8.840-7.160-16-16-16H16C7.160 64 0 71.160 0 80v336c0 17.670 14.330 32 32 32h464c8.840 0 16-7.160 16-16v-32c0-8.840-7.160-16-16-16zM464 96H345.940c-21.380 0-32.090 25.850-16.970 40.970l32.400 32.400L288 242.750l-73.370-73.370c-12.500-12.500-32.760-12.500-45.250 0l-68.690 68.690c-6.250 6.250-6.250 16.380 0 22.630l22.620 22.620c6.250 6.250 16.380 6.250 22.630 0L192 237.250l73.370 73.370c12.500 12.500 32.760 12.500 45.250 0l96-96 32.400 32.400c15.120 15.120 40.970 4.410 40.970-16.970V112c.01-8.840-7.150-16-15.990-16z"/></svg>
<div class="a ol c na" style="left:452.2px;top:336.13px;">N/A</div>
<div class="a or c" style="right:503.5px;top:336.13px;">>3,000</div>
<svg class="a" style="left:529.5px;top:337.03px" width="51" height="12" viewBox="-0.5 -0.8 51 12"><polygon points="1,9.3 1,8.25 0.3,8.25 4,9 7.8,6.6 12.2,6.25 15.3,7.2 19,7.2 22.5,8.1 26.5,5.9 30.6,7.8 34,7.8 37.8,9.4 41.5,8.4 45.3,8.4 49,0 49,9.3" fill="#dbe7f8"/><polyline points="0.3,8.25 4,9 7.8,6.6 12.2,6.25 15.3,7.2 19,7.2 22.5,8.1 26.5,5.9 30.6,7.8 34,7.8 37.8,9.4 41.5,8.4 45.3,8.4 49,0" fill="none" stroke="#9dbcf4" stroke-width="1" stroke-linejoin="round" stroke-linecap="round"/></svg>
<div class="a or c" style="right:351px;top:336.13px;">2</div>
<div class="a or d dp db" style="right:351px;top:349.44px;">+115</div>
<div class="a or c" style="right:281px;top:336.13px;">1/5</div>
<div class="a or d dg" style="right:281px;top:349.44px;">-</div>
<div class="a or c" style="right:228px;top:336.13px;">74</div>
<div class="a or d dp" style="right:228px;top:349.44px;">+54</div>
<div class="a or c" style="right:152px;top:336.13px;">2/5</div>
<div class="a or d dg" style="right:152px;top:349.44px;">-</div>
<div class="a or c s96" style="right:84.70000000000005px;top:336.13px;">>96</div>
<div class="a or d db" style="right:84.70000000000005px;top:349.44px;color:#6b747d">-</div>
<div class="a or c" style="right:24px;top:336.13px;">64</div>
<div class="a rl" style="top:403.37px"></div>
<div class="a ol c" style="left:7px;top:372.80px;">34</div>
<div class="a cb" style="top:373.00px"></div>
<svg class="a" style="left:61.8px;top:374.5px" width="8.6" height="8.6" viewBox="0 0 512 512" fill="#d2d4d6"><path d="M505.1 19.1C503.8 13 499 8.2 492.900 6.900c-32.600-7-58.100-7-83.600-7C305.200 0 243.200 55.700 196.800 128H94.800c-16.300 0-35.600 11.900-42.900 26.500L2.500 253.300c-1.600 3.400-2.500 7-2.500 10.700 0 13.300 10.700 24 24 24h103.800l-22.500 22.500c-11.400 11.400-13 32.300 0 45.300l50.900 50.900c11.200 11.200 32.200 13.200 45.300 0l22.500-22.500V488c0 13.300 10.700 24 24 24 3.700 0 7.300-.9 10.700-2.500l98.700-49.400c14.600-7.300 26.500-26.600 26.500-42.900V314.800c72.600-46.300 128-108.400 128-211.100.1-25.200.1-50.700-6.800-84.600zM384 168c-22.100 0-40-17.900-40-40s17.900-40 40-40 40 17.900 40 40-17.900 40-40 40z"/></svg>
<svg class="a" style="left:89.8px;top:373.7px" width="9.2" height="8.2" viewBox="0 0 576 512" fill="#f7c325"><path d="M259.300 17.800L194 150.200 47.900 171.500c-26.200 3.800-36.700 36.100-17.700 54.600l105.700 103-25 145.500c-4.500 26.300 23.200 46 46.400 33.700L288 439.600l130.700 68.700c23.200 12.200 50.900-7.400 46.400-33.700l-25-145.500 105.700-103c19-18.500 8.500-50.800-17.700-54.600L382 150.200 316.700 17.800c-11.700-23.600-45.600-23.900-57.400 0z"/></svg>
<div class="a ol c" style="left:112px;top:372.80px;">slim wallet for men with money clip</div>
<div class="a ol c" style="left:295.2px;top:372.80px;">Add</div>
<div class="a or c" style="right:632px;top:372.80px;">1,868</div>
<svg class="a" style="left:394.6px;top:372.6px" width="10.2" height="10.2" viewBox="0 0 512 512" fill="#2f78c4"><path d="M496 384H64V80c0-8.840-7.160-16-16-16H16C7.160 64 0 71.160 0 80v336c0 17.670 14.330 32 32 32h464c8.840 0 16-7.160 16-16v-32c0-8.840-7.160-16-16-16zM464 96H345.940c-21.380 0-32.090 25.850-16.970 40.970l32.400 32.400L288 242.750l-73.370-73.370c-12.500-12.500-32.760-12.500-45.250 0l-68.690 68.690c-6.250 6.250-6.250 16.380 0 22.630l22.620 22.620c6.250 6.250 16.380 6.250 22.630 0L192 237.250l73.370 73.370c12.500 12.500 32.760 12.500 45.250 0l96-96 32.400 32.400c15.120 15.120 40.970 4.410 40.970-16.970V112c.01-8.840-7.150-16-15.990-16z"/></svg>
<div class="a ol c na" style="left:452.2px;top:372.80px;">N/A</div>
<div class="a or c" style="right:503.5px;top:372.80px;">>3,000</div>
<svg class="a" style="left:529.5px;top:373.70px" width="51" height="12" viewBox="-0.5 -0.8 51 12"><polygon points="1,9.3 1,9.25 0.3,9.25 4,8.1 8.4,8.25 11,7 14,6.75 17.8,7.2 21.25,8.25 25,3.6 31.5,3.6 34.7,3.1 38.75,5.1 42.2,5.1 45.6,4.25 49,0 49,9.3" fill="#dbe7f8"/><polyline points="0.3,9.25 4,8.1 8.4,8.25 11,7 14,6.75 17.8,7.2 21.25,8.25 25,3.6 31.5,3.6 34.7,3.1 38.75,5.1 42.2,5.1 45.6,4.25 49,0" fill="none" stroke="#9dbcf4" stroke-width="1" stroke-linejoin="round" stroke-linecap="round"/></svg>
<div class="a or c" style="right:351px;top:372.80px;">2</div>
<div class="a or d dp db" style="right:351px;top:386.10px;">+45</div>
<div class="a or c" style="right:281px;top:372.80px;">1/5</div>
<div class="a or d dg" style="right:281px;top:386.10px;">-</div>
<div class="a or c" style="right:228px;top:372.80px;">74</div>
<div class="a or d dp" style="right:228px;top:386.10px;">+20</div>
<div class="a or c" style="right:152px;top:372.80px;">2/5</div>
<div class="a or d dg" style="right:152px;top:386.10px;">-</div>
<div class="a or c s96" style="right:84.70000000000005px;top:372.80px;">>96</div>
<div class="a or d db" style="right:84.70000000000005px;top:386.10px;color:#6b747d">-</div>
<div class="a or c" style="right:24px;top:372.80px;">126</div>
<div class="a rl" style="top:440.04px"></div>
<div class="a ol c" style="left:7px;top:409.47px;">100</div>
<div class="a cb" style="top:409.67px"></div>
<svg class="a" style="left:61.8px;top:411.17px" width="8.6" height="8.6" viewBox="0 0 512 512" fill="#d2d4d6"><path d="M505.1 19.1C503.8 13 499 8.2 492.900 6.900c-32.600-7-58.100-7-83.600-7C305.200 0 243.200 55.700 196.800 128H94.800c-16.300 0-35.600 11.900-42.900 26.500L2.500 253.300c-1.600 3.400-2.500 7-2.500 10.700 0 13.300 10.700 24 24 24h103.800l-22.500 22.500c-11.400 11.400-13 32.300 0 45.300l50.900 50.900c11.200 11.200 32.200 13.200 45.300 0l22.500-22.500V488c0 13.300 10.700 24 24 24 3.700 0 7.300-.9 10.700-2.500l98.700-49.400c14.600-7.300 26.500-26.600 26.500-42.900V314.800c72.600-46.300 128-108.400 128-211.100.1-25.200.1-50.700-6.800-84.600zM384 168c-22.100 0-40-17.900-40-40s17.900-40 40-40 40 17.900 40 40-17.900 40-40 40z"/></svg>
<svg class="a" style="left:89.8px;top:410.37px" width="9.2" height="8.2" viewBox="0 0 576 512" fill="#646a74"><path d="M259.300 17.800L194 150.200 47.900 171.500c-26.200 3.800-36.700 36.100-17.700 54.600l105.700 103-25 145.500c-4.500 26.300 23.200 46 46.400 33.700L288 439.600l130.700 68.700c23.200 12.200 50.900-7.400 46.400-33.700l-25-145.500 105.700-103c19-18.500 8.500-50.800-17.700-54.600L382 150.200 316.700 17.800c-11.700-23.600-45.600-23.900-57.400 0z"/></svg>
<div class="a ol c" style="left:112px;top:409.47px;">travel wallet for men</div>
<div class="a ol c" style="left:295.2px;top:409.47px;">Add</div>
<div class="a or c" style="right:632px;top:409.47px;">3,138</div>
<svg class="a" style="left:394.6px;top:409.27px" width="10.2" height="10.2" viewBox="0 0 512 512" fill="#2f78c4"><path d="M496 384H64V80c0-8.840-7.160-16-16-16H16C7.160 64 0 71.160 0 80v336c0 17.670 14.330 32 32 32h464c8.840 0 16-7.160 16-16v-32c0-8.840-7.160-16-16-16zM464 96H345.940c-21.380 0-32.090 25.850-16.970 40.970l32.400 32.400L288 242.750l-73.370-73.370c-12.500-12.500-32.760-12.500-45.250 0l-68.690 68.690c-6.250 6.250-6.250 16.380 0 22.630l22.620 22.620c6.250 6.250 16.380 6.250 22.630 0L192 237.250l73.370 73.370c12.500 12.500 32.760 12.500 45.250 0l96-96 32.400 32.400c15.120 15.120 40.970 4.410 40.970-16.970V112c.01-8.840-7.150-16-15.990-16z"/></svg>
<div class="a ol c na" style="left:452.2px;top:409.47px;">N/A</div>
<div class="a or c" style="right:503.5px;top:409.47px;">>10,000</div>
<svg class="a" style="left:529.5px;top:410.37px" width="51" height="12" viewBox="-0.5 -0.8 51 12"><circle cx="41" cy="0.3" r="0.7" fill="#8ab1ec"/><circle cx="49" cy="0.3" r="0.7" fill="#8ab1ec"/></svg>
<div class="a or c" style="right:351px;top:409.47px;">3</div>
<div class="a or d dr db" style="right:351px;top:422.77px;">-</div>
<div class="a or c" style="right:281px;top:409.47px;">1/5</div>
<div class="a or d dg" style="right:281px;top:422.77px;">-</div>
<div class="a or c" style="right:228px;top:409.47px;">3</div>
<div class="a or d dr" style="right:228px;top:422.77px;">-3</div>
<div class="a or c" style="right:152px;top:409.47px;">1/5</div>
<div class="a or d dr" style="right:152px;top:422.77px;">-1</div>
<div class="a or c s96" style="right:84.70000000000005px;top:409.47px;">>96</div>
<div class="a or d db" style="right:84.70000000000005px;top:422.77px;color:#6b747d">-</div>
<div class="a or c" style="right:24px;top:409.47px;">262</div>
<div class="a rl" style="top:476.70px"></div>
<div class="a ol c" style="left:7px;top:446.14px;">347</div>
<div class="a cb" style="top:446.34px"></div>
<svg class="a" style="left:61.8px;top:447.84px" width="8.6" height="8.6" viewBox="0 0 512 512" fill="#d2d4d6"><path d="M505.1 19.1C503.8 13 499 8.2 492.900 6.900c-32.600-7-58.100-7-83.600-7C305.200 0 243.200 55.700 196.800 128H94.800c-16.300 0-35.600 11.900-42.900 26.500L2.500 253.300c-1.600 3.400-2.500 7-2.500 10.700 0 13.300 10.700 24 24 24h103.800l-22.500 22.500c-11.400 11.400-13 32.300 0 45.300l50.900 50.900c11.200 11.200 32.200 13.200 45.300 0l22.500-22.500V488c0 13.300 10.700 24 24 24 3.700 0 7.300-.9 10.700-2.500l98.700-49.400c14.600-7.300 26.500-26.600 26.500-42.900V314.800c72.600-46.300 128-108.400 128-211.100.1-25.200.1-50.700-6.800-84.600zM384 168c-22.100 0-40-17.900-40-40s17.900-40 40-40 40 17.900 40 40-17.900 40-40 40z"/></svg>
<svg class="a" style="left:89.8px;top:447.04px" width="9.2" height="8.2" viewBox="0 0 576 512" fill="#646a74"><path d="M259.300 17.800L194 150.200 47.900 171.500c-26.200 3.800-36.700 36.100-17.700 54.600l105.700 103-25 145.500c-4.500 26.300 23.200 46 46.400 33.700L288 439.600l130.700 68.700c23.200 12.200 50.900-7.400 46.400-33.700l-25-145.500 105.700-103c19-18.500 8.500-50.800-17.700-54.600L382 150.200 316.700 17.800c-11.700-23.600-45.600-23.900-57.400 0z"/></svg>
<div class="a ol c" style="left:112px;top:446.14px;">mens leather wallets</div>
<div class="a ol c" style="left:295.2px;top:446.14px;">Add</div>
<div class="a or c" style="right:632px;top:446.14px;">7,462</div>
<svg class="a" style="left:394.6px;top:445.94px" width="10.2" height="10.2" viewBox="0 0 512 512" fill="#2f78c4"><path d="M496 384H64V80c0-8.840-7.160-16-16-16H16C7.160 64 0 71.160 0 80v336c0 17.670 14.330 32 32 32h464c8.840 0 16-7.160 16-16v-32c0-8.840-7.160-16-16-16zM464 96H345.940c-21.380 0-32.090 25.850-16.970 40.970l32.400 32.400L288 242.750l-73.370-73.370c-12.500-12.500-32.760-12.500-45.250 0l-68.690 68.690c-6.250 6.250-6.250 16.380 0 22.630l22.620 22.620c6.250 6.250 16.380 6.250 22.630 0L192 237.250l73.370 73.370c12.500 12.500 32.760 12.500 45.250 0l96-96 32.400 32.400c15.120 15.120 40.970 4.410 40.970-16.970V112c.01-8.840-7.150-16-15.990-16z"/></svg>
<div class="a ol c na" style="left:452.2px;top:446.14px;">N/A</div>
<div class="a or c" style="right:503.5px;top:446.14px;">>7,000</div>
<svg class="a" style="left:529.5px;top:447.04px" width="51" height="12" viewBox="-0.5 -0.8 51 12"><circle cx="48.5" cy="0.3" r="0.7" fill="#8ab1ec"/></svg>
<div class="a or c" style="right:351px;top:446.14px;">3</div>
<div class="a or d dr db" style="right:351px;top:459.44px;">-</div>
<div class="a or c" style="right:281px;top:446.14px;">1/5</div>
<div class="a or d dg" style="right:281px;top:459.44px;">-</div>
<div class="a or c" style="right:228px;top:446.14px;">3</div>
<div class="a or d dr" style="right:228px;top:459.44px;">-3</div>
<div class="a or c" style="right:152px;top:446.14px;">1/5</div>
<div class="a or d dr" style="right:152px;top:459.44px;">-1</div>
<div class="a or c s96" style="right:84.70000000000005px;top:446.14px;">>96</div>
<div class="a or d db" style="right:84.70000000000005px;top:459.44px;color:#6b747d">-</div>
<div class="a or c" style="right:24px;top:446.14px;">473</div>
<div class="a rl" style="top:513.37px"></div>
<div class="a ol c" style="left:7px;top:482.80px;">348</div>
<div class="a cb" style="top:483.00px"></div>
<svg class="a" style="left:61.8px;top:484.5px" width="8.6" height="8.6" viewBox="0 0 512 512" fill="#d2d4d6"><path d="M505.1 19.1C503.8 13 499 8.2 492.900 6.900c-32.600-7-58.100-7-83.600-7C305.200 0 243.200 55.700 196.800 128H94.800c-16.300 0-35.600 11.900-42.900 26.500L2.500 253.300c-1.600 3.400-2.500 7-2.500 10.700 0 13.300 10.700 24 24 24h103.800l-22.500 22.500c-11.400 11.400-13 32.300 0 45.300l50.900 50.900c11.200 11.200 32.200 13.200 45.300 0l22.500-22.500V488c0 13.300 10.700 24 24 24 3.700 0 7.300-.9 10.700-2.500l98.700-49.400c14.600-7.300 26.500-26.600 26.500-42.900V314.800c72.600-46.300 128-108.400 128-211.100.1-25.200.1-50.700-6.800-84.600zM384 168c-22.100 0-40-17.900-40-40s17.900-40 40-40 40 17.900 40 40-17.900 40-40 40z"/></svg>
<svg class="a" style="left:89.8px;top:483.7px" width="9.2" height="8.2" viewBox="0 0 576 512" fill="#646a74"><path d="M259.300 17.800L194 150.200 47.900 171.500c-26.200 3.800-36.700 36.100-17.700 54.600l105.700 103-25 145.500c-4.500 26.300 23.200 46 46.400 33.700L288 439.600l130.700 68.700c23.200 12.200 50.900-7.400 46.400-33.700l-25-145.500 105.700-103c19-18.500 8.500-50.800-17.700-54.600L382 150.200 316.700 17.800c-11.700-23.600-45.600-23.900-57.400 0z"/></svg>
<div class="a ol c" style="left:112px;top:482.80px;">wallet 12 cards slim</div>
<div class="a ol c" style="left:295.2px;top:482.80px;">Add</div>
<div class="a or c" style="right:620px;top:482.80px;color:#a0a6ac">-</div>
<div class="a ol c na" style="left:452.2px;top:482.80px;">N/A</div>
<div class="a or c" style="right:503.5px;top:482.80px;">>4,000</div>
<svg class="a" style="left:529.5px;top:483.70px" width="51" height="12" viewBox="-0.5 -0.8 51 12"><polygon points="1,9.3 1,6.25 0.3,6.25 4.4,6.25 8.1,3.1 11.9,6.25 15.4,3.1 19,6.25 22.8,3.1 26.5,0.2 30.3,0.2 34,3.1 37.8,0.2 49,0.2 49,9.3" fill="#dbe7f8"/><polyline points="0.3,6.25 4.4,6.25 8.1,3.1 11.9,6.25 15.4,3.1 19,6.25 22.8,3.1 26.5,0.2 30.3,0.2 34,3.1 37.8,0.2 49,0.2" fill="none" stroke="#9dbcf4" stroke-width="1" stroke-linejoin="round" stroke-linecap="round"/></svg>
<div class="a or c" style="right:351px;top:482.80px;">3</div>
<div class="a or d dp db" style="right:351px;top:496.10px;">+1</div>
<div class="a or c" style="right:281px;top:482.80px;">1/5</div>
<div class="a or d dg" style="right:281px;top:496.10px;">-</div>
<div class="a or c" style="right:228px;top:482.80px;">3</div>
<div class="a or d dp" style="right:228px;top:496.10px;">+1</div>
<div class="a or c" style="right:152px;top:482.80px;">1/5</div>
<div class="a or d dg" style="right:152px;top:496.10px;">-</div>
<div class="a or c b" style="right:84.70000000000005px;top:482.80px;">65</div>
<div class="a or d db" style="right:84.70000000000005px;top:496.10px;color:#6b747d">-</div>
<div class="a or c" style="right:24px;top:482.80px;color:#a0a6ac">-</div>
<div class="a rl" style="top:550.04px"></div>
<div class="a ol c" style="left:7px;top:519.47px;">40</div>
<div class="a cb" style="top:519.67px"></div>
<svg class="a" style="left:61.8px;top:521.17px" width="8.6" height="8.6" viewBox="0 0 512 512" fill="#d2d4d6"><path d="M505.1 19.1C503.8 13 499 8.2 492.900 6.900c-32.600-7-58.100-7-83.600-7C305.200 0 243.200 55.700 196.800 128H94.800c-16.300 0-35.600 11.900-42.900 26.500L2.500 253.300c-1.600 3.400-2.500 7-2.500 10.700 0 13.300 10.700 24 24 24h103.800l-22.500 22.500c-11.400 11.400-13 32.300 0 45.300l50.900 50.900c11.200 11.200 32.200 13.200 45.300 0l22.500-22.500V488c0 13.300 10.700 24 24 24 3.700 0 7.300-.9 10.700-2.500l98.700-49.400c14.600-7.300 26.500-26.600 26.500-42.900V314.800c72.600-46.300 128-108.400 128-211.100.1-25.200.1-50.700-6.800-84.600zM384 168c-22.100 0-40-17.900-40-40s17.900-40 40-40 40 17.900 40 40-17.900 40-40 40z"/></svg>
<svg class="a" style="left:89.8px;top:520.37px" width="9.2" height="8.2" viewBox="0 0 576 512" fill="#646a74"><path d="M259.300 17.800L194 150.200 47.900 171.500c-26.200 3.800-36.700 36.100-17.700 54.600l105.700 103-25 145.500c-4.500 26.300 23.200 46 46.400 33.700L288 439.600l130.700 68.700c23.200 12.200 50.900-7.400 46.400-33.700l-25-145.500 105.700-103c19-18.500 8.500-50.800-17.700-54.600L382 150.200 316.700 17.800c-11.700-23.600-45.600-23.900-57.400 0z"/></svg>
<div class="a ol c" style="left:112px;top:519.47px;">mens rfid wallet</div>
<div class="a ol c" style="left:295.2px;top:519.47px;">Add</div>
<div class="a or c" style="right:632px;top:519.47px;">856</div>
<svg class="a" style="left:394.6px;top:519.27px" width="10.2" height="10.2" viewBox="0 0 512 512" fill="#2f78c4"><path d="M496 384H64V80c0-8.840-7.160-16-16-16H16C7.160 64 0 71.160 0 80v336c0 17.670 14.330 32 32 32h464c8.840 0 16-7.160 16-16v-32c0-8.840-7.160-16-16-16zM464 96H345.940c-21.380 0-32.090 25.850-16.970 40.970l32.400 32.400L288 242.750l-73.370-73.370c-12.500-12.500-32.760-12.500-45.250 0l-68.690 68.690c-6.250 6.250-6.250 16.380 0 22.630l22.620 22.620c6.250 6.250 16.380 6.250 22.630 0L192 237.250l73.370 73.370c12.500 12.500 32.760 12.500 45.250 0l96-96 32.400 32.400c15.120 15.120 40.970 4.410 40.970-16.970V112c.01-8.840-7.150-16-15.990-16z"/></svg>
<div class="a ol c na" style="left:452.2px;top:519.47px;">N/A</div>
<div class="a or c" style="right:503.5px;top:519.47px;">>6,000</div>
<svg class="a" style="left:529.5px;top:520.37px" width="51" height="12" viewBox="-0.5 -0.8 51 12"><polygon points="1,9.3 1,8.4 0.3,8.4 4.4,10 7.8,6.9 11.9,4.9 15.3,5.5 19,4.1 22.8,5.3 26.5,4.1 30.6,5.9 34,5 37.8,6.25 41.5,5.3 45.3,7.4 49,0 49,9.3" fill="#dbe7f8"/><polyline points="0.3,8.4 4.4,10 7.8,6.9 11.9,4.9 15.3,5.5 19,4.1 22.8,5.3 26.5,4.1 30.6,5.9 34,5 37.8,6.25 41.5,5.3 45.3,7.4 49,0" fill="none" stroke="#9dbcf4" stroke-width="1" stroke-linejoin="round" stroke-linecap="round"/></svg>
<div class="a or c" style="right:351px;top:519.47px;">3</div>
<div class="a or d dp db" style="right:351px;top:532.77px;">+145</div>
<div class="a or c" style="right:281px;top:519.47px;">1/5</div>
<div class="a or d dp" style="right:281px;top:532.77px;">+1</div>
<div class="a or c" style="right:228px;top:519.47px;">92</div>
<div class="a or d dp" style="right:228px;top:532.77px;">+54</div>
<div class="a or c" style="right:152px;top:519.47px;">3/5</div>
<div class="a or d dg" style="right:152px;top:532.77px;">-</div>
<div class="a or c s96" style="right:84.70000000000005px;top:519.47px;">>96</div>
<div class="a or d db" style="right:84.70000000000005px;top:532.77px;color:#6b747d">-</div>
<div class="a or c" style="right:24px;top:519.47px;">43</div>
<div class="a rl" style="top:586.70px"></div>
<div class="a ol c" style="left:7px;top:556.14px;">212</div>
<div class="a cb" style="top:556.34px"></div>
<svg class="a" style="left:61.8px;top:557.84px" width="8.6" height="8.6" viewBox="0 0 512 512" fill="#f5222d"><path d="M505.1 19.1C503.8 13 499 8.2 492.900 6.900c-32.600-7-58.100-7-83.600-7C305.200 0 243.200 55.700 196.800 128H94.800c-16.300 0-35.600 11.900-42.900 26.500L2.500 253.300c-1.600 3.400-2.500 7-2.500 10.700 0 13.300 10.700 24 24 24h103.800l-22.500 22.500c-11.400 11.400-13 32.300 0 45.300l50.900 50.900c11.200 11.200 32.200 13.200 45.300 0l22.500-22.500V488c0 13.300 10.700 24 24 24 3.700 0 7.300-.9 10.700-2.500l98.700-49.400c14.600-7.300 26.500-26.600 26.500-42.900V314.800c72.600-46.300 128-108.400 128-211.100.1-25.200.1-50.700-6.800-84.600zM384 168c-22.100 0-40-17.900-40-40s17.900-40 40-40 40 17.900 40 40-17.900 40-40 40z"/></svg>
<div class="a tm" style="left:-33.8px;width:200px;text-align:center;top:571.94px;">6:03:50</div>
<svg class="a" style="left:89.8px;top:557.04px" width="9.2" height="8.2" viewBox="0 0 576 512" fill="#5fc83c"><path d="M259.300 17.800L194 150.200 47.900 171.500c-26.200 3.800-36.700 36.100-17.700 54.600l105.700 103-25 145.500c-4.500 26.300 23.200 46 46.400 33.700L288 439.600l130.700 68.700c23.200 12.200 50.900-7.400 46.400-33.700l-25-145.500 105.700-103c19-18.500 8.500-50.800-17.700-54.600L382 150.200 316.700 17.800c-11.700-23.600-45.600-23.900-57.400 0z"/></svg>
<div class="a ol c" style="left:112px;top:556.14px;">men wallet slim</div>
<div class="a ol c" style="left:295.2px;top:556.14px;">Add</div>
<div class="a or c" style="right:632px;top:556.14px;">8,206</div>
<svg class="a" style="left:394.6px;top:555.94px" width="10.2" height="10.2" viewBox="0 0 512 512" fill="#2f78c4"><path d="M496 384H64V80c0-8.840-7.160-16-16-16H16C7.160 64 0 71.160 0 80v336c0 17.670 14.330 32 32 32h464c8.840 0 16-7.160 16-16v-32c0-8.840-7.160-16-16-16zM464 96H345.940c-21.380 0-32.090 25.850-16.970 40.970l32.400 32.400L288 242.750l-73.370-73.370c-12.500-12.500-32.760-12.500-45.250 0l-68.690 68.690c-6.250 6.250-6.250 16.380 0 22.630l22.620 22.620c6.250 6.250 16.380 6.250 22.630 0L192 237.250l73.370 73.370c12.500 12.500 32.760 12.500 45.250 0l96-96 32.400 32.400c15.120 15.120 40.970 4.410 40.970-16.970V112c.01-8.840-7.150-16-15.990-16z"/></svg>
<div class="a ol c na" style="left:452.2px;top:556.14px;">N/A</div>
<div class="a or c" style="right:503.5px;top:556.14px;">>5,000</div>
<svg class="a" style="left:529.5px;top:557.04px" width="51" height="12" viewBox="-0.5 -0.8 51 12"><polygon points="1,9.3 1,7.5 0,7.5 3.75,7.9 7.3,2.1 14.5,2.1 17.3,0.2 24.8,0.2 27.8,3.75 31.4,1.9 34.7,3.75 38.2,5.6 41.7,2.1 45.5,2.1 48.7,3.75 48.7,9.3" fill="#dbe7f8"/><polyline points="0,7.5 3.75,7.9 7.3,2.1 14.5,2.1 17.3,0.2 24.8,0.2 27.8,3.75 31.4,1.9 34.7,3.75 38.2,5.6 41.7,2.1 45.5,2.1 48.7,3.75" fill="none" stroke="#9dbcf4" stroke-width="1" stroke-linejoin="round" stroke-linecap="round"/></svg>
<div class="a or c" style="right:351px;top:556.14px;">5</div>
<div class="a or d dr db" style="right:351px;top:569.44px;">-1</div>
<div class="a or c" style="right:281px;top:556.14px;">1/5</div>
<div class="a or d dg" style="right:281px;top:569.44px;">-</div>
<div class="a or c" style="right:228px;top:556.14px;">61</div>
<div class="a or d dr" style="right:228px;top:569.44px;">-2</div>
<div class="a or c" style="right:152px;top:556.14px;">5/5</div>
<div class="a or d dg" style="right:152px;top:569.44px;">-</div>
<div class="a or c b" style="right:84.70000000000005px;top:556.14px;">3</div>
<div class="a or d dp db" style="right:84.70000000000005px;top:569.44px;">+53</div>
<div class="a or c" style="right:24px;top:556.14px;">602</div>
<div class="a rl" style="top:623.37px"></div>
<div class="a ol c" style="left:7px;top:592.80px;">7</div>
<div class="a cb" style="top:593.00px"></div>
<svg class="a" style="left:61.8px;top:594.5px" width="8.6" height="8.6" viewBox="0 0 512 512" fill="#f5222d"><path d="M505.1 19.1C503.8 13 499 8.2 492.900 6.900c-32.600-7-58.100-7-83.600-7C305.200 0 243.200 55.700 196.800 128H94.800c-16.300 0-35.600 11.900-42.900 26.500L2.500 253.300c-1.600 3.400-2.500 7-2.500 10.700 0 13.300 10.700 24 24 24h103.800l-22.500 22.500c-11.400 11.400-13 32.300 0 45.300l50.900 50.900c11.200 11.200 32.200 13.200 45.300 0l22.500-22.500V488c0 13.300 10.700 24 24 24 3.700 0 7.300-.9 10.700-2.500l98.700-49.400c14.600-7.300 26.500-26.600 26.500-42.900V314.800c72.600-46.300 128-108.400 128-211.100.1-25.200.1-50.700-6.800-84.600zM384 168c-22.100 0-40-17.900-40-40s17.900-40 40-40 40 17.900 40 40-17.900 40-40 40z"/></svg>
<svg class="a" style="left:89.8px;top:593.7px" width="9.2" height="8.2" viewBox="0 0 576 512" fill="#646a74"><path d="M259.300 17.800L194 150.200 47.900 171.500c-26.200 3.800-36.700 36.100-17.700 54.600l105.700 103-25 145.500c-4.500 26.300 23.200 46 46.400 33.700L288 439.600l130.700 68.700c23.200 12.200 50.900-7.400 46.400-33.700l-25-145.500 105.700-103c19-18.500 8.500-50.800-17.700-54.600L382 150.200 316.700 17.800c-11.700-23.600-45.600-23.900-57.400 0z"/></svg>
<div class="a ol c" style="left:112px;top:592.80px;">wallets for men slim minimalist</div>
<div class="a ol c" style="left:295.2px;top:592.80px;">Add</div>
<div class="a or c" style="right:632px;top:592.80px;">491</div>
<svg class="a" style="left:394.6px;top:592.6px" width="10.2" height="10.2" viewBox="0 0 512 512" fill="#2f78c4"><path d="M496 384H64V80c0-8.840-7.160-16-16-16H16C7.160 64 0 71.160 0 80v336c0 17.670 14.330 32 32 32h464c8.840 0 16-7.160 16-16v-32c0-8.840-7.160-16-16-16zM464 96H345.940c-21.380 0-32.090 25.850-16.970 40.970l32.400 32.400L288 242.750l-73.370-73.370c-12.500-12.500-32.760-12.500-45.250 0l-68.690 68.690c-6.250 6.250-6.250 16.380 0 22.630l22.620 22.620c6.250 6.250 16.380 6.250 22.630 0L192 237.250l73.370 73.370c12.500 12.500 32.760 12.500 45.250 0l96-96 32.400 32.400c15.120 15.120 40.970 4.410 40.970-16.970V112c.01-8.840-7.150-16-15.990-16z"/></svg>
<div class="a ol c na" style="left:452.2px;top:592.80px;">N/A</div>
<div class="a or c" style="right:503.5px;top:592.80px;">>2,000</div>
<svg class="a" style="left:529.5px;top:593.70px" width="51" height="12" viewBox="-0.5 -0.8 51 12"><polygon points="1,9.3 1,9 0,9 4.2,7.1 8,5.9 11.5,2.2 15.3,0.4 22,0.4 26.2,0.2 48.7,0.2 48.7,9.3" fill="#dbe7f8"/><polyline points="0,9 4.2,7.1 8,5.9 11.5,2.2 15.3,0.4 22,0.4 26.2,0.2 48.7,0.2" fill="none" stroke="#9dbcf4" stroke-width="1" stroke-linejoin="round" stroke-linecap="round"/></svg>
<div class="a or c" style="right:351px;top:592.80px;">6</div>
<div class="a or d dg" style="right:351px;top:606.10px;">-</div>
<div class="a or c" style="right:281px;top:592.80px;">1/5</div>
<div class="a or d dg" style="right:281px;top:606.10px;">-</div>
<div class="a or c" style="right:228px;top:592.80px;">62</div>
<div class="a or d dr" style="right:228px;top:606.10px;">-2</div>
<div class="a or c" style="right:152px;top:592.80px;">2/5</div>
<div class="a or d dg" style="right:152px;top:606.10px;">-</div>
<div class="a or c s96" style="right:84.70000000000005px;top:592.80px;">>96</div>
<div class="a or d db" style="right:84.70000000000005px;top:606.10px;color:#6b747d">-</div>
<div class="a or c" style="right:24px;top:592.80px;">39</div>
</div>
</body>
</html>
